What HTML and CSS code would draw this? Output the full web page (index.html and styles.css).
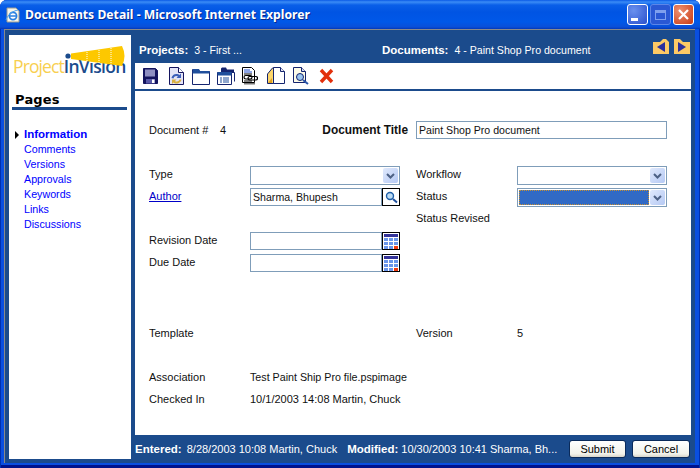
FILE: index.html
```html
<!DOCTYPE html>
<html>
<head>
    <title>Documents Detail - Microsoft Internet Explorer</title>
    <link rel="stylesheet" href="styles.css">
</head>
<body>
    <div class="window">
        <div class="titlebar">
            <svg class="ie-icon" width="16" height="16" viewBox="0 0 16 16">
                <path d="M2 1h9l3 3v11H2z" fill="#f8f6ea" stroke="#9a9a90"/>
                <circle cx="8" cy="9" r="3.600" fill="#fff" stroke="#2a80e0" stroke-width="1.700"/>
                <path d="M4.500 9h7" stroke="#2a80e0" stroke-width="1.300"/>
                <path d="M1 13c2-6 7-9 12-10" fill="none" stroke="#4aa0f0" stroke-width="1"/>
            </svg>
            <span class="title-text">Documents Detail - Microsoft Internet Explorer</span>
            <div class="win-buttons">
                <div class="win-btn"><span class="min-mark"></span></div>
                <div class="win-btn win-btn-off"><span class="max-mark"></span></div>
                <div class="win-btn win-btn-close">
                    <svg width="13" height="13" viewBox="0 0 13 13"><path d="M2 2l9 9M11 2l-9 9" stroke="#fff" stroke-width="2.200"/></svg>
                </div>
            </div>
        </div>
        <div class="frame">
            <div class="sidebar">
                <div class="logo">
                    <svg class="logo-cone" width="62" height="21" viewBox="0 0 62 21">
                        <path d="M6 7.500L57 0q5 10 0 20L6 13z" fill="#fdc800"/>
                        <path d="M22 6v9M34 4v13M46 2v17" stroke="#fff" stroke-width="1" stroke-dasharray="1 1"/>
                        <circle cx="3" cy="10" r="2.600" fill="#1b4b8c"/>
                    </svg>
                    <div class="logo-text"><span class="logo-project">Project</span><span class="logo-vision">InVision</span></div>
                </div>
                <h2 class="pages-head">Pages</h2>
                <ul class="nav">
                    <li class="nav-on"><a href="#">Information</a></li>
                    <li><a href="#">Comments</a></li>
                    <li><a href="#">Versions</a></li>
                    <li><a href="#">Approvals</a></li>
                    <li><a href="#">Keywords</a></li>
                    <li><a href="#">Links</a></li>
                    <li><a href="#">Discussions</a></li>
                </ul>
            </div>
            <div class="main">
                <div class="topbar">
                    <div class="crumb crumb-project"><b>Projects:</b><span>3 - First ...</span></div>
                    <div class="crumb crumb-doc"><b>Documents:</b><span>4 - Paint Shop Pro document</span></div>
                    <div class="arrows">
                        <svg width="16" height="15" viewBox="0 0 16 15"><path d="M0 3h7l3-3h3l3 3v12H0z" fill="#fdc965"/><path d="M4 8l8-5v10z" fill="#2b2f9e"/></svg>
                        <svg width="16" height="15" viewBox="0 0 16 15"><path d="M0 0h6l3 3h7v12H0z" fill="#fdc965"/><path d="M12 8L4 3v10z" fill="#2b2f9e"/></svg>
                    </div>
                </div>
                <div class="toolbar">
                    <!-- save -->
                    <svg width="15" height="16" viewBox="0 0 15 16"><path d="M.5.500h12l2 2v13H.5z" fill="#14145e" stroke="#14145e"/><path d="M2 1.500h10v7H2z" fill="#8f8fc2"/><path d="M3 11h9v4.500H3z" fill="#5a5aa8"/><path d="M9 11.500h2.500v3.500H9z" fill="#fff"/></svg>
                    <!-- refresh -->
                    <svg width="15" height="18" viewBox="0 0 15 18"><path d="M.5.500h9l5 5v12H.5z" fill="#e4e4f6" stroke="#14145e"/><path d="M9.500.500v5h5" fill="#fff" stroke="#14145e"/><path d="M2.500 11a5 5 0 0 1 8-3l1.500-1.500V11H7.500L9 9.500A3 3 0 0 0 4.500 11.500z" fill="#3c5fb8"/><path d="M12.500 12.500a5 5 0 0 1-8 3L3 17v-4.500h4.500L6 14a3 3 0 0 0 4.500-1.500z" fill="#d8b040"/></svg>
                    <!-- window -->
                    <svg width="18" height="17" viewBox="0 0 18 17"><path d="M.5 16.500V1.500h6l1 2h10v13z" fill="#fff" stroke="#14246e"/><path d="M1 1h6l1 2h9.500v2.500H.5z" fill="#1f4f9c"/></svg>
                    <!-- list -->
                    <svg width="18" height="18" viewBox="0 0 18 18"><path d="M4 1.500l1-1h4l1 2h7v3H4z" fill="#14246e"/><path d="M4.500 5.500h13v9" fill="#fff" stroke="#14246e"/><path d="M.5 5.500h14v12H.5z" fill="#fff" stroke="#14246e"/><path d="M.5 5h14v3.500H.5z" fill="#1f4f9c"/><path d="M3 11h2M3 13h2M3 15h2M6 11h6M6 13h6M6 15h6" stroke="#1f4f9c"/></svg>
                    <!-- attachment -->
                    <svg width="16" height="18" viewBox="0 0 16 18"><path d="M.5.500h9l3 3v12H.5z" fill="#fff" stroke="#000"/><path d="M2 3h6M2 5h8" stroke="#1f4fd0"/><path d="M2 7h8M2 14h8" stroke="#000"/><path d="M13 16H2v1.500h11z" fill="#777"/><rect x="2" y="8.500" width="8" height="3.500" rx="1.700" fill="#fff" stroke="#000" stroke-width="1.200"/><rect x="6" y="9.500" width="9.500" height="3.500" rx="1.700" fill="none" stroke="#000" stroke-width="1.200"/></svg>
                    <!-- open -->
                    <svg width="18" height="18" viewBox="0 0 18 18"><path d="M.5 16.500V7l5-6h3v15.500z" fill="#fdd66b" stroke="#14246e"/><path d="M6.500.500h7l4 4v12h-11z" fill="#fff" stroke="#14246e"/><path d="M13.500.500v4h4" fill="#e4e4f2" stroke="#14246e"/><path d="M1 16l4-5v5z" fill="#e0a020"/></svg>
                    <!-- preview -->
                    <svg width="16" height="18" viewBox="0 0 16 18"><path d="M.5.500h8l4 4v11H.5z" fill="#fdfbe8" stroke="#14246e"/><path d="M8.500.500v4h4" fill="#dde" stroke="#14246e"/><circle cx="7" cy="10" r="3.500" fill="#9ac4ee" stroke="#14246e"/><path d="M10 13l5 4" stroke="#2a55a8" stroke-width="2"/></svg>
                    <!-- delete -->
                    <svg width="15" height="16" viewBox="0 0 15 16"><path d="M2 2l11 12M13 2L2 14" stroke="#e2300c" stroke-width="3.400"/></svg>
                </div>
                <div class="content">
                    <div class="doc-row">
                        <span class="doc-label">Document #</span>
                        <span class="doc-num">4</span>
                        <b class="doc-title-label">Document Title</b>
                        <input class="field doc-title" type="text" value="Paint Shop Pro document">
                    </div>
                    <div class="form-grid">
                        <span>Type</span>
                        <div class="field select"><span class="select-val"></span><span class="chevron"><svg width="9" height="6" viewBox="0 0 9 6"><path d="M1 1l3.500 3.500L8 1" fill="none" stroke="#4d6185" stroke-width="2"/></svg></span></div>
                        <span class="col-r">Workflow</span>
                        <div class="field select"><span class="select-val"></span><span class="chevron"><svg width="9" height="6" viewBox="0 0 9 6"><path d="M1 1l3.500 3.500L8 1" fill="none" stroke="#4d6185" stroke-width="2"/></svg></span></div>

                        <a href="#" class="author-link">Author</a>
                        <div class="with-btn">
                            <input class="field" type="text" value="Sharma, Bhupesh">
                            <span class="pick-btn"><svg width="14" height="14" viewBox="0 0 14 14"><circle cx="6" cy="6" r="3.500" fill="#bcdcf5" stroke="#1f5fa8" stroke-width="1.400"/><path d="M9 9l4 3.500" stroke="#1f4f9c" stroke-width="2"/></svg></span>
                        </div>
                        <span class="col-r">Status</span>
                        <div class="field select"><span class="select-val select-on"></span><span class="chevron"><svg width="9" height="6" viewBox="0 0 9 6"><path d="M1 1l3.500 3.500L8 1" fill="none" stroke="#4d6185" stroke-width="2"/></svg></span></div>

                        <span></span>
                        <span></span>
                        <span class="col-r">Status Revised</span>
                        <span></span>

                        <span>Revision Date</span>
                        <div class="with-btn">
                            <input class="field" type="text">
                            <span class="pick-btn"><svg width="14" height="15" viewBox="0 0 14 15"><path d="M0 0h14v3H0z" fill="#33339a"/><path d="M0 4h4v3H0zM5 4h4v3H5zM10 4h4v3h-4zM0 8h4v3H0zM5 8h4v3H5zM10 8h4v3h-4zM0 12h4v3H0zM5 12h4v3H5z" fill="#6a96ea"/><path d="M10 12h4v3h-4z" fill="#f03a10"/></svg></span>
                        </div>
                        <span></span>
                        <span></span>

                        <span>Due Date</span>
                        <div class="with-btn">
                            <input class="field" type="text">
                            <span class="pick-btn"><svg width="14" height="15" viewBox="0 0 14 15"><path d="M0 0h14v3H0z" fill="#33339a"/><path d="M0 4h4v3H0zM5 4h4v3H5zM10 4h4v3h-4zM0 8h4v3H0zM5 8h4v3H5zM10 8h4v3h-4zM0 12h4v3H0zM5 12h4v3H5z" fill="#6a96ea"/><path d="M10 12h4v3h-4z" fill="#f03a10"/></svg></span>
                        </div>
                    </div>
                    <div class="info-grid">
                        <span>Template</span><span></span><span class="col-r">Version</span><span>5</span>
                        <span></span><span></span><span></span><span></span>
                        <span>Association</span><span class="span-3 assoc">Test Paint Ship Pro file.pspimage</span>
                        <span>Checked In</span><span class="span-3">10/1/2003 14:08 Martin, Chuck</span>
                    </div>
                </div>
                <div class="footer">
                    <div class="stamp"><b>Entered:</b> 8/28/2003 10:08 Martin, Chuck</div>
                    <div class="stamp"><b>Modified:</b> 10/30/2003 10:41 Sharma, Bh...</div>
                    <button class="btn btn-submit">Submit</button>
                    <button class="btn">Cancel</button>
                </div>
            </div>
        </div>
    </div>
</body>
</html>
```

FILE: styles.css
```css
html, body {
    margin: 0;
    padding: 0;
    height: 100%;
    background-color: #fff;
}
body {
    font-family: "Liberation Sans", Arial, sans-serif;
    font-size: 11px;
    color: #111;
}
.window {
    width: 700px;
    height: 468px;
    box-sizing: border-box;
    display: flex;
    flex-direction: column;
    background: #0a4fe0;
    box-shadow: inset 1px 0 #0030b0, inset -1px 0 #0030b0, inset 0 -3px #00138c;
    border-radius: 7px 7px 0 0;
    overflow: hidden;
}
.titlebar {
    height: 29px;
    flex: none;
    display: flex;
    align-items: center;
    padding: 0 6px 0 5px;
    box-sizing: border-box;
    background: linear-gradient(#0a5ae6 0, #3b8cf6 2px, #0a5fe8 5px, #0054e3 12px, #0058e8 22px, #0a4fd8 27px, #0338b8 29px);
}
.ie-icon {
    margin-right: 4px;
}
.title-text {
    font-family: "Noto Sans", sans-serif;
    font-weight: 700;
    font-size: 12.2px;
    color: #fff;
    text-shadow: 1px 1px 0 #0a2a8a;
}
.win-buttons {
    margin-left: auto;
    display: flex;
    gap: 2px;
}
.win-btn {
    width: 21px;
    height: 21px;
    box-sizing: border-box;
    border: 1px solid #fff;
    border-radius: 3px;
    display: flex;
    align-items: center;
    justify-content: center;
    background: radial-gradient(circle at 30% 30%, #6a90ee, #2a50cc);
}
.win-btn-off {
    border-color: #5c86e8;
    background: #2a58d4;
}
.win-btn-close {
    background: radial-gradient(circle at 30% 30%, #ee9070, #c83a14);
}
.min-mark {
    width: 7px;
    height: 3px;
    background: #fff;
    margin: 9px 7px 0 0;
}
.max-mark {
    width: 11px;
    height: 10px;
    border: 1px solid #7fa0ee;
    border-top-width: 3px;
    box-sizing: border-box;
}
.frame {
    flex: 1;
    min-height: 0;
    display: flex;
    gap: 4px;
    margin: 0 5px 5px 4px;
    padding: 0 4px 4px 4px;
    background: #1b4b8c;
    border-top: 1px solid #8a8a8a;
    border-left: 1px solid #8a8a8a;
}
.sidebar {
    width: 122px;
    flex: none;
    margin-top: 5px;
    background: #fff;
}
.logo {
    height: 42px;
    padding: 4px 0 0 4px;
    position: relative;
}
.logo-cone {
    position: absolute;
    top: 11px;
    left: 56px;
}
.logo-text {
    padding-top: 17px;
    font-family: "Open Sans", sans-serif;
    font-size: 17.5px;
    line-height: 20px;
    letter-spacing: -.6px;
    white-space: nowrap;
}
.logo-project {
    color: #f8cf50;
    letter-spacing: -.9px;
}
.logo-vision {
    color: #1b4b8c;
    font-weight: 600;
    letter-spacing: -.7px;
}
.pages-head {
    margin: 11px 4px 0 3px;
    padding: 0 0 0 3px;
    border-bottom: 3px solid #1b4b8c;
    font-family: "DejaVu Sans", sans-serif;
    font-size: 13px;
    line-height: 15px;
    font-weight: 700;
    letter-spacing: .2px;
    color: #000;
}
.nav {
    list-style: none;
    margin: 17px 0 0;
    padding: 0 0 0 15px;
}
.nav li {
    height: 15px;
    line-height: 15px;
    font-size: 10.7px;
    position: relative;
}
.nav a {
    color: #0000ff;
    text-decoration: none;
}
.nav-on a {
    font-size: 11.5px;
    font-weight: 700;
}
.nav-on::before {
    content: "";
    position: absolute;
    left: -9px;
    top: 4px;
    border-left: 4px solid #000;
    border-top: 4px solid transparent;
    border-bottom: 4px solid transparent;
}
.main {
    flex: 1;
    min-width: 0;
    display: flex;
    flex-direction: column;
}
.topbar {
    height: 33px;
    flex: none;
    box-sizing: border-box;
    display: flex;
    align-items: center;
    padding: 7px 1px 0 4px;
    color: #fff;
}
.crumb b {
    margin-right: 6px;
    font-size: 11.5px;
}
.crumb span {
    font-size: 10.6px;
}
.crumb-project {
    width: 243px;
}
.arrows {
    margin-left: auto;
    display: flex;
    gap: 5px;
    margin-top: -7px;
}
.toolbar {
    height: 26px;
    flex: none;
    display: flex;
    align-items: center;
    gap: 8px;
    padding-left: 8px;
    background: #fff;
    border-bottom: 2px solid #1b4b8c;
}
.toolbar svg:nth-child(2) {
    margin-left: 3px;
}
.toolbar svg:nth-child(4),
.toolbar svg:nth-child(5) {
    margin-left: -1px;
}
.toolbar svg:nth-child(6) {
    margin-left: 1px;
}
.toolbar svg:nth-child(8) {
    margin-left: 2px;
}
.content {
    flex: 1;
    min-height: 0;
    background: #fff;
    padding: 30px 0 0 14px;
}
.doc-row {
    display: flex;
    align-items: center;
    height: 18px;
}
.doc-label {
    width: 71px;
}
.doc-num {
    width: 26px;
}
.doc-title-label {
    width: 162px;
    text-align: right;
    font-size: 11.9px;
    margin-right: 8px;
}
.field {
    box-sizing: border-box;
    height: 19px;
    border: 1px solid #7f9db9;
    background: #fff;
    font-family: inherit;
    font-size: 10.6px;
    color: #111;
    padding: 0 2px;
    margin: 0;
    outline: 0;
    border-radius: 0;
}
.doc-title {
    width: 251px;
    height: 18px;
}
.form-grid {
    display: grid;
    grid-template-columns: 101px 150px 117px 150px;
    grid-auto-rows: 22px;
    margin-top: 27px;
    line-height: 16px;
}
.col-r {
    padding-left: 16px;
}
.author-link {
    color: #0000c8;
}
.select {
    display: flex;
    align-items: center;
    padding: 1px;
}
.select-val {
    flex: 1;
    height: 15px;
    margin-right: 1px;
}
.select-on {
    background: #316ac5;
    outline: 1px dotted #c89030;
    outline-offset: -1px;
}
.chevron {
    width: 15px;
    height: 15px;
    display: flex;
    align-items: center;
    justify-content: center;
    background: linear-gradient(135deg, #e0e9fc, #b5c9f4);
    border-radius: 2px;
}
.with-btn {
    display: flex;
    height: 18px;
}
.with-btn .field {
    width: 132px;
    height: 18px;
}
.pick-btn {
    width: 18px;
    height: 18px;
    box-sizing: border-box;
    border: 1px solid #000;
    display: flex;
    align-items: center;
    justify-content: center;
}
.info-grid {
    display: grid;
    grid-template-columns: 101px 150px 117px 150px;
    grid-auto-rows: 22px;
    align-items: center;
    margin-top: 46px;
}
.span-3 {
    grid-column: span 3;
}
.assoc {
    font-size: 10.7px;
}
.footer {
    height: 24px;
    flex: none;
    box-sizing: border-box;
    display: flex;
    align-items: center;
    padding-top: 4px;
    color: #fff;
    font-size: 11px;
    white-space: nowrap;
}
.stamp b {
    font-size: 11.5px;
}
.stamp:first-child b {
    margin-right: 2px;
}
.stamp {
    margin-right: 10px;
}
.btn {
    width: 58px;
    height: 18px;
    padding: 0;
    margin-left: 6px;
    font-family: inherit;
    font-size: 11px;
    color: #000;
    background: linear-gradient(#fff, #f2f2ea 80%, #d8d4c8);
    border: 1px solid #0a2a5a;
    border-radius: 3px;
}
.btn-submit {
    width: 57px;
    margin-left: auto;
}
.footer .btn:last-child {
    margin-right: 1px;
}
```
